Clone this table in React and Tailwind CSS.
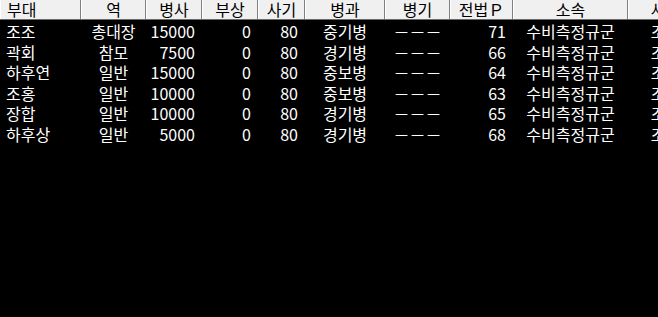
const cols = [
  { key: "name", label: "부대", w: 81, head: "justify-start pl-[6px]", cell: "justify-start pl-[6px]" },
  { key: "role", label: "역", w: 65, head: "justify-center", cell: "justify-center" },
  { key: "troops", label: "병사", w: 56, head: "justify-center", cell: "justify-end pr-[7px]" },
  { key: "hurt", label: "부상", w: 56, head: "justify-center", cell: "justify-end pr-[7px]" },
  { key: "morale", label: "사기", w: 47, head: "justify-center", cell: "justify-end pr-[7px]" },
  { key: "branch", label: "병과", w: 80, head: "justify-center", cell: "justify-center" },
  { key: "weapon", label: "병기", w: 65, head: "justify-center", cell: "justify-center" },
  { key: "tactic", label: "전법Ｐ", w: 63, head: "justify-center", cell: "justify-end pr-[7px]" },
  { key: "unit", label: "소속", w: 115, head: "justify-center", cell: "justify-center" },
  { key: "extra", label: "사", w: 60, head: "justify-center", cell: "justify-center" },
];

const rows = [
  { name: "조조", role: "총대장", troops: 15000, hurt: 0, morale: 80, branch: "중기병", weapon: "－－－", tactic: 71, unit: "수비측정규군", extra: "조" },
  { name: "곽회", role: "참모", troops: 7500, hurt: 0, morale: 80, branch: "경기병", weapon: "－－－", tactic: 66, unit: "수비측정규군", extra: "조" },
  { name: "하후연", role: "일반", troops: 15000, hurt: 0, morale: 80, branch: "중보병", weapon: "－－－", tactic: 64, unit: "수비측정규군", extra: "조" },
  { name: "조홍", role: "일반", troops: 10000, hurt: 0, morale: 80, branch: "중보병", weapon: "－－－", tactic: 63, unit: "수비측정규군", extra: "조" },
  { name: "장합", role: "일반", troops: 10000, hurt: 0, morale: 80, branch: "경기병", weapon: "－－－", tactic: 65, unit: "수비측정규군", extra: "조" },
  { name: "하후상", role: "일반", troops: 5000, hurt: 0, morale: 80, branch: "경기병", weapon: "－－－", tactic: 68, unit: "수비측정규군", extra: "조" },
];

export default function App() {
  return (
    <div
      className="w-[658px] h-[317px] overflow-hidden bg-black text-[16px]"
      style={{ fontFamily: '"Noto Sans CJK KR", "Noto Sans", sans-serif' }}
    >
      <div className="flex h-[20px] border-b border-[#696969] leading-[19px]">
        {cols.map((c) => (
          <div
            key={c.key}
            style={{ width: c.w }}
            className={`flex shrink-0 whitespace-nowrap bg-[#f0f0f0] text-black border-l border-white border-r border-r-[#808080] ${c.head}`}
          >
            {c.label}
          </div>
        ))}
      </div>
      <div className="pt-[1px] leading-[20px]">
        {rows.map((r, i) => (
          <div key={i} className="flex h-[20.5px] text-white">
            {cols.map((c) => (
              <div
                key={c.key}
                style={{ width: c.w }}
                className={`flex shrink-0 whitespace-nowrap ${c.cell}`}
              >
                {r[c.key]}
              </div>
            ))}
          </div>
        ))}
      </div>
    </div>
  );
}
